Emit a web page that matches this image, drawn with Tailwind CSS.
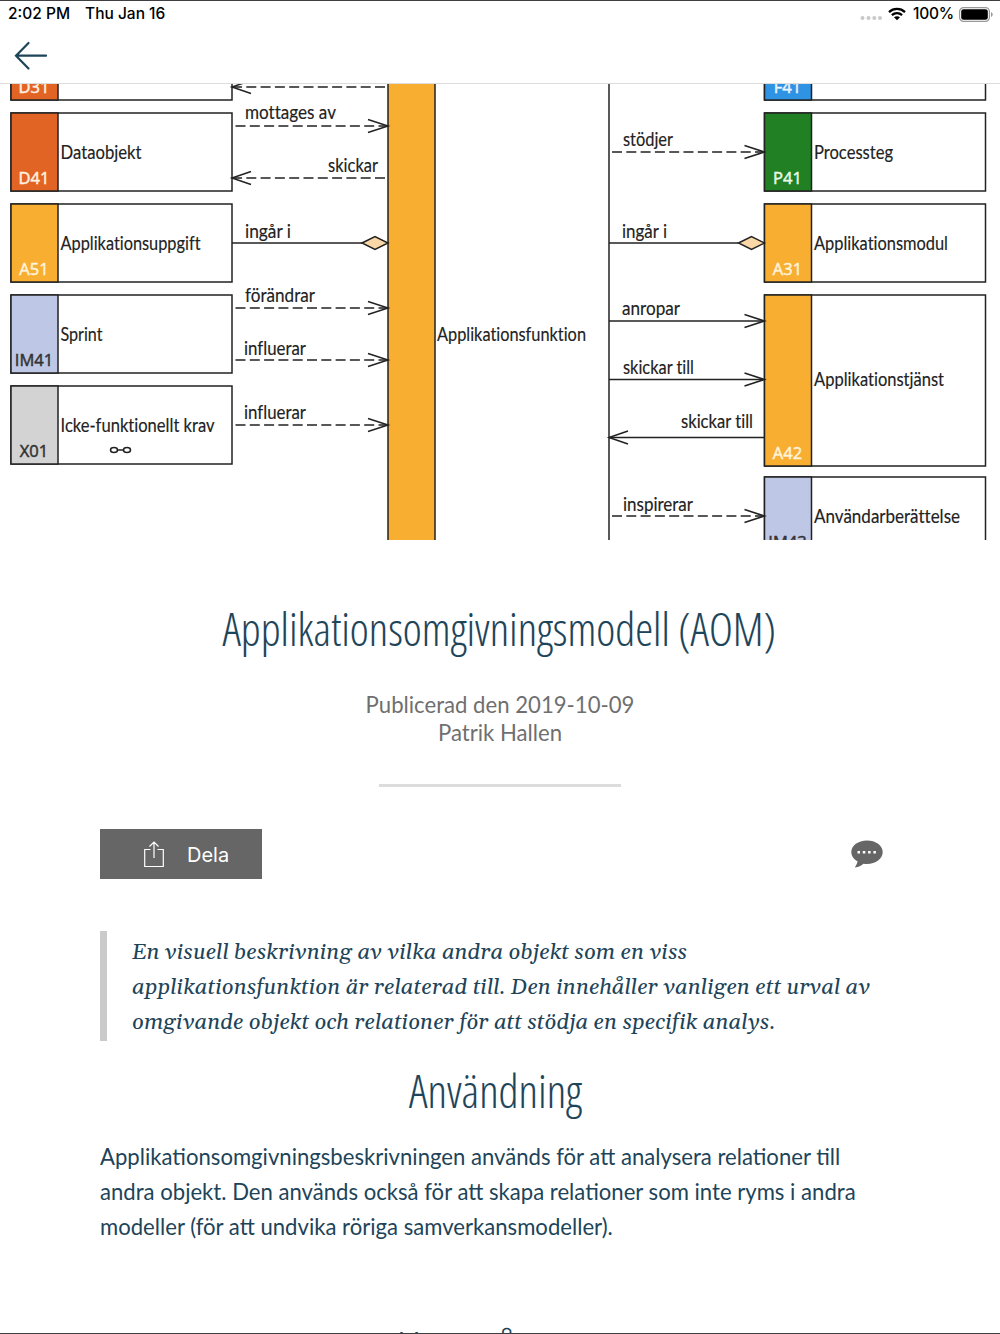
<!DOCTYPE html>
<html lang="sv">
<head>
<meta charset="utf-8">
<title>Applikationsomgivningsmodell (AOM)</title>
<script src="https://cdn.jsdelivr.net/npm/@tailwindcss/browser@4"></script>
</head>
<body class="bg-white">
<div class="w-[1000px] h-[1334px] overflow-hidden flex flex-col bg-white text-[#1d4459] border-y border-[#3f3f41] font-['Lato',sans-serif]">
  <header class="h-[83px] shrink-0 border-b border-[#dcdcdc] flex flex-col">
    <div class="h-[26px] flex items-center justify-between pl-[8px] pr-[6px] text-black font-['Inter',sans-serif] text-[15.5px] font-medium">
      <div class="flex gap-[15px]"><span>2:02 PM</span><span>Thu Jan 16</span></div>
      <div class="flex items-center">
        <svg class="w-[23px] h-[20px]" viewBox="0 0 23 20" fill="#c9c9c9"><circle cx="2.5" cy="14" r="2"/><circle cx="8.5" cy="14" r="2"/><circle cx="14.3" cy="14" r="2"/><circle cx="20" cy="14" r="2"/></svg>
        <svg class="w-[18px] h-[14px] ml-[5px] mr-[7px]" viewBox="0 0 18 14" fill="none" stroke="#000" stroke-width="2.3"><path d="M1 5.1C5.5.9 12.500.9 17 5.100M3.900 8.200C6.800 5.500 11.200 5.500 14.100 8.200"/><path d="M6 10.300C7.700 8.800 10.300 8.800 12 10.300L9 13.300Z" fill="#000" stroke="none"/></svg>
        <span class="tracking-[-0.2px]">100%</span>
        <svg class="w-[35px] h-[15px] ml-[5px]" viewBox="0 0 35 15"><rect x=".6" y=".6" width="29.800" height="13.800" rx="4" fill="none" stroke="#999" stroke-width="1.200"/><rect x="2.200" y="2.200" width="26.600" height="10.600" rx="2.400"/><path d="M32 5v5q1.700-.8 1.700-2.500T32 5" fill="#999"/></svg>
      </div>
    </div>
    <svg class="w-[36px] h-[30px] ml-[14px] mt-[14px]" viewBox="14 41 36 30" fill="none" stroke="#1d4459" stroke-width="2.200" stroke-linecap="round"><path d="M46 55.700H16M28.500 43 16 55.700 28.500 68.500"/></svg>
  </header>
  <svg id="diagram" class="w-[1000px] h-[456px] shrink-0 block [font-variant-ligatures:none]" viewBox="0 84 1000 456" stroke="#222" stroke-width="1.500"></svg>
  <article class="flex flex-col items-center">
    <h1 class="mt-[60px] h-[60px]"><svg class="w-[1000px] h-[60px]" viewBox="0 600 1000 60"><text x="222.500" y="645.500" textLength="553.500" lengthAdjust="spacingAndGlyphs" fill="#1d4459" class="font-['Open_Sans',sans-serif] font-light text-[45.500px] [font-stretch:75%]" stroke="#1d4459" stroke-width=".12">Applikationsomgivningsmodell (AOM)</text></svg></h1>
    <p class="mt-[31px] text-center text-[22.150px] leading-[27.500px] text-[#6f6f6f]">Publicerad den 2019-10-09<br>Patrik Hallen</p>
    <div class="mt-[38px] w-[242px] h-[3px] bg-[#dcdcdc]"></div>
    <div class="mt-[42px] w-[800px] h-[50px] flex justify-between items-center pr-[17px]">
      <button class="w-[162px] h-[50px] bg-[#666] flex items-center text-white text-[20px] pl-[44px] font-['Inter',sans-serif]">
        <svg class="w-[20px] h-[28px] mr-[23px]" viewBox="0 0 20 28" fill="none" stroke="#fff" stroke-width="1.200"><path d="M6.500 9.500H.7V26.500H19.300V9.500H13.500M10 18V2M5.500 6.500 10 2 14.500 6.500"/></svg><span class="pt-px">Dela</span>
      </button>
      <svg class="w-[32px] h-[28px]" viewBox="0 0 32 28"><path d="M16 .5C7.300.5.300 5.600.300 12c0 3.900 2.400 7.200 6.200 9.300C6.200 23.500 5 25.800 3.800 27.500 7.500 27 10.500 25.500 12.500 23.700c1.100.2 2.300.300 3.500.300 8.700 0 15.700-5.400 15.700-12S24.700.5 16 .5Z" fill="#666"/><g fill="#fff"><rect x="6.500" y="11" width="2.500" height="2.500"/><rect x="11.800" y="11" width="2.500" height="2.500"/><rect x="17.100" y="11" width="2.500" height="2.500"/><rect x="22.400" y="11" width="2.500" height="2.500"/></g></svg>
    </div>
    <blockquote class="mt-[52px] w-[800px] h-[110px] border-l-[7px] border-[#cacaca] pl-[25px] pt-[4px] italic text-[22.150px] leading-[35px] whitespace-nowrap font-['Gelasio','Georgia','Liberation_Serif',serif] [font-variant-ligatures:none]">
      En visuell beskrivning av vilka andra objekt som en viss<br>applikationsfunktion är relaterad till. Den innehåller vanligen ett urval av<br>omgivande objekt och relationer för att stödja en specifik analys.
    </blockquote>
    <h2 class="mt-[21px] h-[60px]"><svg class="w-[1000px] h-[60px]" viewBox="0 1062 1000 60"><text x="409" y="1108" textLength="173" lengthAdjust="spacingAndGlyphs" fill="#1d4459" class="font-['Open_Sans',sans-serif] font-light text-[45.500px] [font-stretch:75%]" stroke="#1d4459" stroke-width=".12">Användning</text></svg></h2>
    <p class="mt-[17px] w-[800px] text-[22.120px] leading-[35.100px] whitespace-nowrap">
      Applikationsomgivningsbeskrivningen används för att analysera relationer till<br>andra objekt. Den används också för att skapa relationer som inte ryms i andra<br>modeller (för att undvika röriga samverkansmodeller).
    </p>
    <h2 class="mt-[76px] h-[60px] shrink-0"><svg class="w-[1000px] h-[60px]" viewBox="0 1319 1000 60"><text x="396.500" y="1363.500" textLength="177" lengthAdjust="spacingAndGlyphs" fill="#1d4459" class="font-['Open_Sans',sans-serif] font-light text-[45.500px] [font-stretch:75%]">Hur många</text></svg></h2>
  </article>
</div>
<script>
  const parts = [];
  const O = '#f8ae31';
  const line = (d, dash) => parts.push(`<path d="${d}" fill="none" ${dash ? 'stroke-dasharray="10 4.300"' : ''}/>`);
  const text = (x, y, s, w) => parts.push(`<text x="${x}" y="${y}" textLength="${w}" lengthAdjust="spacingAndGlyphs" fill="#222" stroke="#222" stroke-width=".15" font-family="Lato, sans-serif" font-size="18.500">${s}</text>`);
  function box(x, y, h, color, code, name, w, ink, nameY) {
    parts.push(`<rect x="${x}" y="${y}" width="221" height="${h}" fill="#fff"/><rect x="${x}" y="${y}" width="47" height="${h}" fill="${color}"/>`);
    parts.push(`<text x="${x + 23}" y="${y + h - 7.500}" text-anchor="middle" fill="${ink}" stroke="${ink}" stroke-width=".5" font-family="Open Sans, sans-serif" font-size="16.500">${code}</text>`);
    if (name) text(x + 49.500, nameY, name, w);
  }
  // [x, y, height, colour, code, name, name width, code ink, name baseline]
  [
    [11, 22, 78, '#e26424', 'D31', '', 0, '#fff0e0', 0],
    [11, 113, 78, '#e26424', 'D41', 'Dataobjekt', 81, '#fff0e0', 159],
    [11, 204, 78, O, 'A51', 'Applikationsuppgift', 140, '#fff4dc', 249.500],
    [11, 295, 78, '#bec7e5', 'IM41', 'Sprint', 42, '#333', 340.500],
    [11, 386, 78, '#d3d3d3', 'X01', 'Icke-funktionellt krav', 154, '#333', 431.500],
    [764.500, 22, 78, '#2f93e3', 'F41', '', 0, '#e8f4ff', 0],
    [764.500, 113, 78, '#218023', 'P41', 'Processteg', 79, '#e8f8e8', 159],
    [764.500, 204, 78, O, 'A31', 'Applikationsmodul', 134, '#fff4dc', 249.500],
    [764.500, 295, 171, O, 'A42', 'Applikationstjänst', 130, '#fff4dc', 386],
    [764.500, 477, 78, '#bec7e5', 'IM43', 'Användarberättelse', 146, '#333', 523]
  ].forEach(b => box(...b));
  parts.push(`<rect x="388" y="60" width="47" height="520" fill="${O}"/>`);
  text(437, 341, 'Applikationsfunktion', 149);
  line('M609 80V560');
  const right = (x1, x2, y, dash) => { line(`M${x1} ${y}H${x2}`, dash); line(`M${x2 - 20} ${y - 6.500}L${x2} ${y}L${x2 - 20} ${y + 6.500}`); };
  const left = (x1, x2, y, dash) => { line(`M${x2} ${y}H${x1}`, dash); line(`M${x1 + 19} ${y - 6.500}L${x1} ${y}L${x1 + 19} ${y + 6.500}`); };
  const diamond = (x1, x2, y) => { line(`M${x1} ${y}H${x2 - 26}`); parts.push(`<path d="M${x2 - 26} ${y}l13-6.500 13 6.500-13 6.500z" fill="#fad7a6"/>`); };
  left(232, 385, 87, 1); right(235.500, 388, 126, 1); left(232, 385, 178, 1); diamond(232, 388, 243);
  right(235.500, 388, 308, 1); right(235.500, 388, 360, 1); right(235.500, 388, 425, 1);
  right(612, 764.500, 152, 1); diamond(609, 764.500, 243); right(609, 764.500, 321); right(609, 764.500, 379.500); left(609, 764.500, 437.500); right(612, 764.500, 516, 1);
  text(245, 118.500, 'mottages av', 91); text(328, 172, 'skickar', 50); text(245, 238, 'ingår i', 46);
  text(245, 302, 'förändrar', 70); text(244, 355, 'influerar', 62); text(244, 419, 'influerar', 62);
  text(623, 146, 'stödjer', 50); text(622, 238, 'ingår i', 45); text(622, 315, 'anropar', 58);
  text(623, 373.500, 'skickar till', 71); text(681, 427.500, 'skickar till', 72); text(623, 511, 'inspirerar', 70);
  parts.push('<g fill="none"><ellipse cx="114" cy="450" rx="3.500" ry="2.500"/><ellipse cx="127" cy="450" rx="3.500" ry="2.500"/><path d="M117.500 450h6"/></g>');
  document.getElementById('diagram').innerHTML = parts.join('');
</script>
</body>
</html>
